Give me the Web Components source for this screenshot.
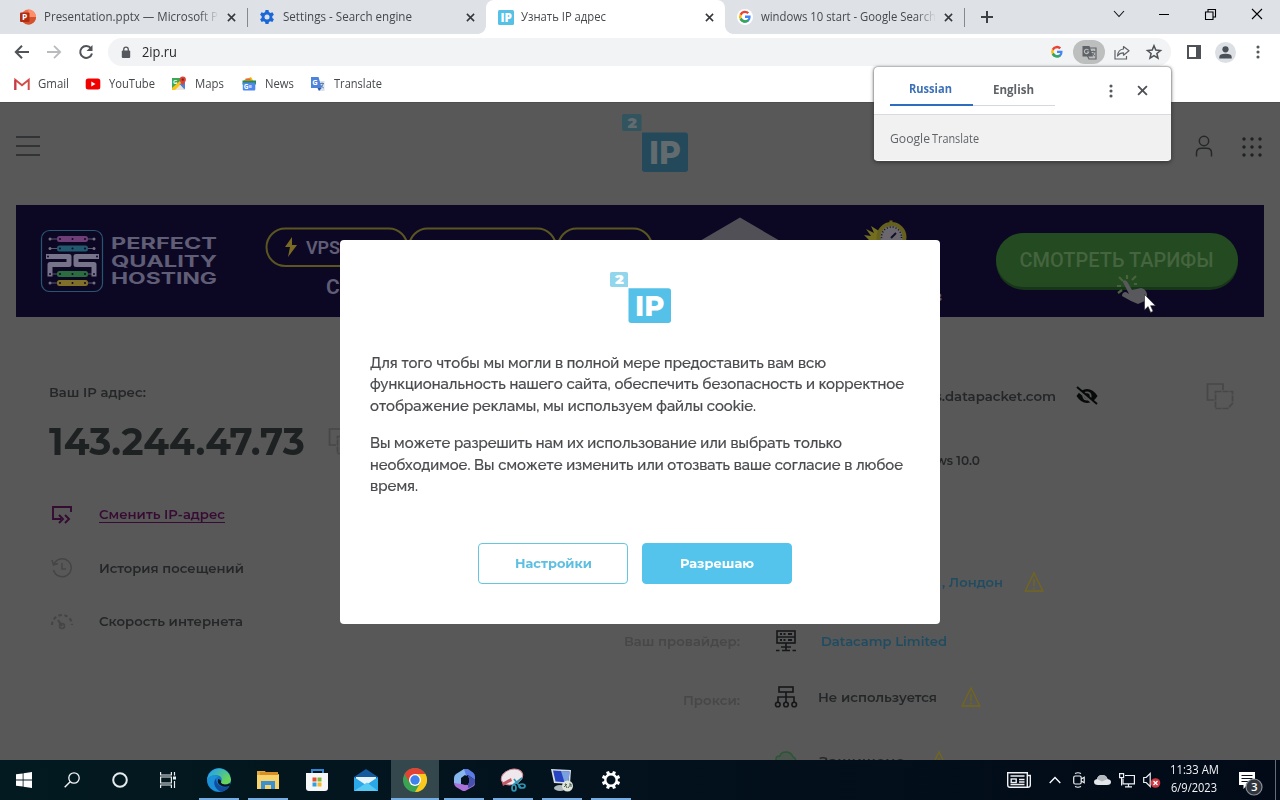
<!DOCTYPE html>
<html lang="ru">
<head>
<meta charset="utf-8">
<title>Узнать IP адрес</title>
<style>
    body {
        margin: 0;
        width: 1280px;
        height: 800px;
        overflow: hidden;
        font-family: "Open Sans", "Noto Sans", sans-serif;
        font-size: 12px;
        color: #45484c;
        display: flex;
        flex-direction: column;
        position: relative;
    }
</style>
</head>
<body>

<tab-strip>
    <browser-tab icon="ppt" text="Presentation.pptx — Microsoft P" w="174" fade line style="width:233px"></browser-tab>
    <browser-tab icon="gear" text="Settings - Search engine" w="129" style="width:233px"></browser-tab>
    <browser-tab icon="ip" text="Узнать IP адрес" w="85" active style="width:239px"></browser-tab>
    <browser-tab icon="google" text="windows 10 start - Google Search" w="175" fade line style="width:233px;margin-left:-6px"></browser-tab>
</tab-strip>
<browser-toolbar url="2ip.ru"></browser-toolbar>
<bookmarks-bar>
    <book-mark icon="gmail" w="31" style="margin-right:16px">Gmail</book-mark>
    <book-mark icon="youtube" w="46" style="margin-right:16px">YouTube</book-mark>
    <book-mark icon="maps" w="29" style="margin-right:17px">Maps</book-mark>
    <book-mark icon="news" w="29" style="margin-right:16px">News</book-mark>
    <book-mark icon="translate" w="48">Translate</book-mark>
</bookmarks-bar>

<ip-page></ip-page>
<task-bar></task-bar>

<translate-popup></translate-popup>
<cookie-modal>
    <p>
        <fit-text w="456">Для того чтобы мы могли в полной мере предоставить вам всю</fit-text>
        <fit-text w="534">функциональность нашего сайта, обеспечить безопасность и корректное</fit-text>
        <fit-text w="386">отображение рекламы, мы используем файлы cookie.</fit-text>
    </p>
    <p>
        <fit-text w="472">Вы можете разрешить нам их использование или выбрать только</fit-text>
        <fit-text w="533">необходимое. Вы сможете изменить или отозвать ваше согласие в любое</fit-text>
        <fit-text w="48">время.</fit-text>
    </p>
    <modal-button slot="actions" w="77">Настройки</modal-button>
    <modal-button slot="actions" w="74" primary>Разрешаю</modal-button>
</cookie-modal>
<mouse-pointer></mouse-pointer>

<script>
// name: [width, height, svg content]
const googleG = `
    <path d="M8 6.6v3h4.2c-.3 1.5-1.800 2.800-4.200 2.800A4.500 4.500 0 0 1 3.800 9.400L1.300 11.300A7.500 7.500 0 0 0 8 15.500c4 0 7-2.800 7-7.400 0-.500 0-1-.1-1.500z" fill="#4285f4"/>
    <path d="M1.300 11.300A7.500 7.500 0 0 0 8 15.500c2 0 3.600-.600 4.800-1.700l-2.400-1.900a4.500 4.500 0 0 1-6.600-2.500z" fill="#34a853"/>
    <path d="M3.800 9.400a4.500 4.500 0 0 1 0-2.900L1.300 4.600a7.500 7.500 0 0 0 0 6.700z" fill="#fbbc05"/>
    <path d="M8 3.500c1.200 0 2.200.4 3 1.200l2.200-2.200A7.500 7.500 0 0 0 1.300 4.600l2.500 1.900A4.500 4.500 0 0 1 8 3.500z" fill="#ea4335"/>`

const cross = `<path d="M1 1l8 8M9 1L1 9" stroke="currentColor" stroke-width="1.7" fill="none"/>`
const warn = `<path d="M10 2L18.800 20H1.200z" fill="none" stroke="#71651f" stroke-width="1.500"/><path d="M10 8v7M10 16.500v2" stroke="#71651f" stroke-width="1.400"/>`
const copyIcon = `<g fill="none" stroke="currentColor" stroke-width="1.700"><path d="M8 18H1.500V2H17v6"/><path d="M9.500 9.500h17v12l-5 5h-12z" stroke-dasharray="6 1"/></g>`

const icons = {
    ppt: [16, 16, `<circle cx="8.500" cy="8" r="7.500" fill="#ed6c47"/><path d="M8.500.5A7.500 7.500 0 0 1 16 8H8.500z" fill="#ff8f6b"/><path d="M1 8h15a7.500 7.500 0 0 1-13 5z" fill="#d35230"/><rect y="3.500" width="9.500" height="9.500" rx="1" fill="#b02d14"/><text x="2" y="11.400" font-family="Open Sans" font-weight="700" font-size="8.500" fill="#fff">P</text>`],
    gear: [16, 16, `<path d="M6.500 1h3l.4 2 1.500.9 2-.7 1.500 2.600-1.600 1.400v1.700l1.600 1.400-1.500 2.600-2-.700-1.500.9-.4 2h-3l-.4-2-1.500-.9-2 .7-1.500-2.600 1.600-1.400V7.200L1.100 5.800l1.500-2.600 2 .7 1.500-.9z" fill="#1a67d8"/><circle cx="8" cy="8" r="2.500" fill="#dee1e6"/>`],
    ip: [16, 15, `<rect width="16" height="15" rx="1.500" fill="#55c1e6"/><text x="2.500" y="12" font-family="Open Sans" font-weight="800" font-size="12" textLength="11.500" lengthAdjust="spacingAndGlyphs" fill="#fff">IP</text>`],
    google: [16, 16, `<circle cx="8" cy="8" r="8" fill="#fff"/><g transform="translate(1.600 1.300) scale(.8)">${googleG}</g>`],
    g: [16, 16, `<g transform="translate(1.800 1.500) scale(.78)">${googleG}</g>`],
    cross: [10, 10, cross],
    plus: [12, 12, `<path d="M6 0v12M0 6h12" stroke="#3c4043" stroke-width="2"/>`],
    chev: [12, 8, `<path d="M1 1l5 5.500L11 1" fill="none" stroke="#111" stroke-width="1.100"/>`],
    min: [10, 10, `<path d="M0 5.500h10" stroke="#000"/>`],
    restore: [11, 11, `<path d="M.5 3h7.500v7.500H.5zM3 3V.5h7.500V8H8" fill="none" stroke="#000" stroke-width="1.100"/>`],
    close: [12, 12, `<path d="M1 1l10 10M11 1L1 11" stroke="#000" stroke-width="1.100"/>`],
    back: [16, 14, `<path d="M15 7H2M8 .8L1.800 7 8 13.200" fill="none" stroke="#505357" stroke-width="2"/>`],
    forward: [16, 14, `<path d="M1 7h13M8 .8L14.200 7 8 13.200" fill="none" stroke="#b9bbbe" stroke-width="1.800"/>`],
    reload: [16, 16, `<path d="M13 4.300A6 6 0 1 0 14 9.500" fill="none" stroke="#505357" stroke-width="2"/><path d="M14.500 1v6h-6z" fill="#505357"/>`],
    lock: [10, 13, `<rect x=".8" y="4.500" width="8.400" height="7.500" rx="1" fill="#55585c"/><path d="M2.700 5V3.500a2.300 2.300 0 0 1 4.600 0V5" fill="none" stroke="#55585c" stroke-width="1.300"/>`],
    trans: [15, 15, `<path d="M5 3h9v11H7l-2-4" fill="none" stroke="#5f6368" stroke-width="1.200"/><path d="M.5 1h7l3.500 10.500H.5z" fill="#5f6368"/><path d="M6.500 5.300A2.200 2.200 0 1 0 6.700 7H4.800" fill="none" stroke="#bbb" stroke-width="1.100"/><path d="M9 6.500h4.500M11.200 5.500v1M12.500 6.500q-.5 2.500-3 4.500M10 8q1 2 3 3" fill="none" stroke="#5f6368" stroke-width=".9"/>`],
    share: [16, 15, `<path d="M1 5v9h11.500v-3" fill="none" stroke="#5f6368" stroke-width="1.200"/><path d="M9.500 1.500l5.500 4.300-5.500 4.400V7.800Q5.500 7.800 3.500 11 4 4.500 9.500 4z" fill="none" stroke="#5f6368" stroke-width="1.200" stroke-linejoin="round"/>`],
    star: [16, 16, `<path d="M8 1.800l1.800 4.300 4.700.4-3.600 3 1.100 4.600L8 11.700l-4 2.400 1.100-4.600-3.600-3 4.700-.4z" fill="none" stroke="#4e5155" stroke-width="1.500"/>`],
    panel: [14, 14, `<rect x="1" y="1" width="12" height="12" fill="none" stroke="#4e5155" stroke-width="2"/><path d="M9 0h5v14H9z" fill="#4e5155"/>`],
    avatar: [21, 21, `<circle cx="10.500" cy="10.500" r="10.500" fill="#dcdfe4"/><circle cx="10.500" cy="7.300" r="3.100" fill="#4a5058"/><path d="M4.300 16.500V15q0-3.300 6.200-3.300t6.200 3.300v1.500z" fill="#4a5058"/>`],
    dots: [4, 14, `<g fill="#55585c"><circle cx="2" cy="2" r="1.550"/><circle cx="2" cy="7" r="1.550"/><circle cx="2" cy="12" r="1.550"/></g>`],
    gmail: [16, 12, `<path d="M1.300 12V1.800L8 7.300l6.700-5.500V12" fill="none" stroke="#d44a44" stroke-width="2"/><path d="M1.300 12V2" stroke="#c33c4e" stroke-width="2"/>`],
    youtube: [16, 12, `<rect x=".7" y=".5" width="14.600" height="11" rx="2.500" fill="#f20000"/><path d="M6.300 3.600L10.500 6l-4.200 2.400z" fill="#fff"/>`],
    maps: [16, 16, `<path d="M1 2h12v12H1z" fill="#3ba757"/><path d="M1 14l7-7 6 7z" fill="#e9e5dc"/><path d="M1 12V14h3l8-8-2-2z" fill="#fbc116"/><path d="M8.500 8l5.500 5.500V6z" fill="#4a80e8"/><text x="2" y="7.500" font-family="Open Sans" font-weight="700" font-size="6" fill="#fff">G</text><path d="M11.700 9.500C10 6.500 8.700 5.800 8.700 3.700a3 3 0 0 1 6.200 0c0 2.100-1.600 2.800-3.200 5.800z" fill="#db4437"/><circle cx="11.800" cy="3.700" r="1.100" fill="#7b1f1a"/>`],
    news: [16, 16, `<path d="M3 4l7-3 3 5H3z" fill="#fbbc04"/><path d="M1.500 4.500h13.500v4h-13.500z" fill="#228b51"/><path d="M4.500 2.500h5v2h-5z" fill="#e0664b"/><rect x="1.800" y="6.500" width="12.500" height="8" rx="1" fill="#4d88ee"/><text x="2.800" y="13" font-family="Open Sans" font-weight="700" font-size="6.500" fill="#fff">G≡</text>`],
    translate: [16, 16, `<path d="M6 5h8.500v10H9z" fill="#dbe1ec"/><path d="M1 1h7.500l3.200 11H1z" fill="#4c83dc"/><path d="M7.500 12h4.200L9 15z" fill="#2e58b0"/><text x="2.300" y="9" font-family="Open Sans" font-weight="700" font-size="7.500" fill="#fff">G</text><path d="M9.500 7.500H14M12 6.500v1M13.300 7.500q-.5 2.500-2.700 4M10.800 9q1 2 3 3" fill="none" stroke="#5c7fb5" stroke-width="1"/>`],

    logo: [66, 58, `<path d="M2 0h15.500a2 2 0 0 1 2 2v15H2a2 2 0 0 1-2-2V2a2 2 0 0 1 2-2z" fill="var(--logo-small)"/><path d="M20 18.500h43a3 3 0 0 1 3 3V55a3 3 0 0 1-3 3H23a3 3 0 0 1-3-3z" fill="var(--logo-big)"/><text x="5.500" y="13.500" font-family="Montserrat, Inter" font-weight="900" font-size="14" textLength="9.500" lengthAdjust="spacingAndGlyphs" fill="var(--logo-text)">2</text><text x="27" y="49.500" font-family="Montserrat, Inter" font-weight="800" font-size="33" textLength="32" lengthAdjust="spacingAndGlyphs" fill="var(--logo-text)">IP</text>`],
    burger: [24, 20, `<path d="M0 1h24M0 10h24M0 19h24" stroke="#252728" stroke-width="1.700"/>`],
    person: [18, 22, `<g fill="none" stroke="#252728" stroke-width="1.500"><circle cx="9" cy="6" r="4.700"/><path d="M1.500 21.500V18q0-4.800 4.800-4.800h5.400q4.800 0 4.800 4.800v3.500"/></g>`],
    apps: [20, 20, `<g fill="#1f2122"><circle cx="2" cy="2" r="1.700"/><circle cx="10" cy="2" r="1.700"/><circle cx="18" cy="2" r="1.700"/><circle cx="2" cy="10" r="1.700"/><circle cx="10" cy="10" r="1.700"/><circle cx="18" cy="10" r="1.700"/><circle cx="2" cy="18" r="1.700"/><circle cx="10" cy="18" r="1.700"/><circle cx="18" cy="18" r="1.700"/></g>`],
    change: [22, 20, `<g fill="none" stroke="#350c31" stroke-width="1.900"><path d="M20 7V2H2v12h8"/><path d="M8 10l4 4-4 4M14 10l4 4-4 4"/></g>`],
    history: [22, 22, `<g fill="none" stroke="#454545" stroke-width="1.500"><path d="M3 7a9 9 0 1 1-.5 6M1 3l1.500 5 4.500-1.500M11 6v6h4"/></g>`],
    speed: [24, 18, `<g fill="none" stroke="#454545" stroke-width="2.200"><path d="M2 13A10 10 0 0 1 22 13" stroke-dasharray="3.500 2.500"/><path d="M8 8l4 6"/><circle cx="12" cy="14" r="2.500" stroke-width="1.500"/></g>`],
    copy: [28, 28, copyIcon],
    eye: [24, 20, `<path d="M1.500 10Q6 3 12 3t10.500 7Q18 17 12 17T1.500 10z" fill="#080909"/><circle cx="12" cy="10" r="4.600" fill="#585858"/><circle cx="12" cy="10" r="2.700" fill="#080909"/><path d="M2 3l19 16" stroke="#585858" stroke-width="3.500"/><path d="M2 1l20 17" stroke="#080909" stroke-width="2"/>`],
    warn: [20, 22, warn],
    server: [20, 22, `<g fill="none" stroke="#161718" stroke-width="1.600"><rect x="1" y="1" width="18" height="12"/><path d="M1 7h18M10 13v7M0 20.500h3.500M6 20.500h8M16.500 20.500H20M5 17h10"/><path d="M4 4h2M7.500 4h2M12 4h4M4 10h2M7.500 10h2M12 10h4" stroke-width="1.800"/></g>`],
    network: [24, 22, `<g fill="none" stroke="#161718" stroke-width="1.600"><rect x="5" y="1" width="14" height="5"/><path d="M12 6v10M4 16v-5h16v5"/><circle cx="3.800" cy="18.500" r="2.300"/><circle cx="12" cy="18.500" r="2.300"/><circle cx="20.200" cy="18.500" r="2.300"/></g>`],
    shield: [24, 22, `<path d="M2 20V9q0-3 4-3 1-4 6-4t7 5q3 1 3 5v10" fill="#35563b" fill-opacity=".35" stroke="#2c5535" stroke-width="1.500"/>`],

    win: [16, 16, `<path d="M0 2.300l6.700-.9v6.200H0zM7.500 1.300L16 0v7.600H7.500zM0 8.400h6.700v6.200L0 13.700zM7.500 8.400H16V16l-8.500-1.300z" fill="#fff"/>`],
    search: [16, 16, `<circle cx="10" cy="6" r="5.200" fill="none" stroke="#f2f5f6" stroke-width="1.300"/><path d="M6.200 9.800L.7 15.300" stroke="#f2f5f6" stroke-width="1.400"/>`],
    cortana: [16, 16, `<circle cx="8" cy="8" r="6.800" fill="none" stroke="#e4ecec" stroke-width="2"/>`],
    taskview: [16, 16, `<g fill="none" stroke="#e8eded" stroke-width="1.200"><path d="M.6 0v3h10.800V0M.6 16v-3h10.800v3"/><path d="M.6 5h10.800v6H.6zM14.500 0v3.500M14.500 9v7"/></g><rect x="13" y="4.500" width="3" height="3" fill="#e8eded"/>`],
    edge: [24, 24, `<defs><linearGradient id="e" x1="0" y1="0" x2="1" y2=".7"><stop offset=".2" stop-color="#2ba7df"/><stop offset=".9" stop-color="#67d65a"/></linearGradient></defs><circle cx="12" cy="12" r="12" fill="#1878c9"/><path d="M.3 10A12 12 0 0 1 24 11.500c0 3.500-3 5.500-6.500 5-3.300-.300-4-1.600-3.300-3C16 10 13.300 7.300 9 7.300 5 7.300 1.500 9 .3 12z" fill="url(#e)"/><path d="M9 10.500c-3.500 3-2 10.500 4.500 13A12 12 0 0 1 .2 12C1 8 7 6 11.500 8 10.500 8.500 9.700 9.500 9 10.500z" fill="#1b91d8"/><path d="M9 10.500C5 15 9 22 14 23.600c3.500-.300 6.700-2.400 8.500-5.300C16 21 9 17.500 9 10.500z" fill="#124c9c"/><path d="M14.200 13.500q-1.200 2 3.300 3 3 .4 5-1.500l.7 2.500q-5 2.500-9.500 0-4-2.500-2.500-6.500 2.700 0 3 2.500z" fill="#04161f"/>`],
    folder: [22, 20, `<path d="M0 1h8l2 3h12v15H0z" fill="#e6a93e"/><path d="M3 2h18v4H3z" fill="#d98f26"/><path d="M0 5h22v14H0z" fill="#f8d26b"/><path d="M4 19v-8h14v8h-4v-4H8v4z" fill="#3c90cf"/>`],
    store: [24, 24, `<path d="M7 6V2h11v4" fill="none" stroke="#3288d2" stroke-width="2"/><path d="M1 5h22v15a3 3 0 0 1-3 3H4a3 3 0 0 1-3-3z" fill="#f6f7f8"/><path d="M7.500 9.500h4v4h-4z" fill="#e5512e"/><path d="M12.500 9.500h4v4h-4z" fill="#7eb837"/><path d="M7.500 14.500h4v4h-4z" fill="#32a0df"/><path d="M12.500 14.500h4v4h-4z" fill="#f4b72d"/>`],
    mail: [24, 22, `<path d="M0 8l12-8 12 8v5H0z" fill="#135a9f"/><path d="M2 8h20v8H2z" fill="#e9f3fb"/><path d="M0 8l12 8 12-8v14H0z" fill="#2ba8e8"/><path d="M0 22l13-8.500L24 22z" fill="#56c9f5"/>`],
    chrome: [24, 24, `<circle cx="12" cy="12" r="12" fill="#3ba452"/><path d="M1.600 6A12 12 0 0 1 22.400 6H12L6.800 15z" fill="#e34133"/><path d="M22.400 6A12 12 0 0 1 12 24l5.200-9L12 6z" fill="#fbc91c"/><circle cx="12" cy="12" r="6" fill="#fff"/><circle cx="12" cy="12" r="4.700" fill="#3f82ee"/>`],
    m365: [22, 24, `<path d="M11 1h4l5 3.500q2 1.500 2 4V12l-7-5-7 4V4z" fill="#5b7ce4"/><path d="M11 1L3 6Q1 7.500 1 10v5l7 4v-8l5-4z" fill="#88b6ee"/><path d="M1 15q0 2.500 2 4l6 3.500q2 1 4 0l8-4.500q1-1 1-3v-3l-7 5-7-1z" fill="#aa72d8"/><path d="M15 7l7 5v3q-1 3-7 5z" fill="#4850ad"/><path d="M8 10l4-3 4 3v5l-4 2-4-2z" fill="#06131e"/>`],
    snip: [24, 24, `<ellipse cx="11" cy="9" rx="11" ry="7.500" fill="#eee8ec" stroke="#d58a98" stroke-width="1" transform="rotate(-18 11 9)"/><path d="M1 15l9-5 1 3-9 5z" fill="#c45965"/><g fill="none" stroke="#2e95b3" stroke-width="1.700"><path d="M12 17l9-7M20 20l-7-9"/><ellipse cx="13" cy="20" rx="2" ry="3"/><ellipse cx="21" cy="18" rx="3" ry="2"/></g>`],
    remote: [24, 24, `<path d="M1 1l20 1-1 14-16-1z" fill="#d7dee2"/><path d="M3 2.500l16.500 1-1 11-13-1z" fill="#2743c2"/><path d="M11 3l8.500.500-1 11-4-.3z" fill="#7ba0e0"/><ellipse cx="10" cy="20" rx="6" ry="3" fill="#aebabb"/><circle cx="17.500" cy="18" r="5.500" fill="#dfe5d9"/><path d="M14 19l3-3M16 16h-1l2 4M18 20l3-4M19 16h2v3" stroke="#4e6659" stroke-width="1" fill="none"/>`],
    settings: [20, 20, `<circle cx="10" cy="10" r="5.700" fill="none" stroke="#fff" stroke-width="2.400"/><g stroke="#fff" stroke-width="3.200"><path d="M6.500 1.500l1.200 3M13.500 1.500l-1.200 3M6.500 18.500l1.200-3M13.500 18.500l-1.200-3M1.500 6.500l3 1.200M1.500 13.500l3-1.200M18.500 6.500l-3 1.200M18.500 13.500l-3-1.200"/></g>`],
    paper: [24, 16, `<g fill="none" stroke="#eef0f2" stroke-width="1.400"><path d="M.7.7h19.600v14.600H3q-2.300 0-2.300-2.300zM20.300 3.500h3v9.500q0 2.300-2.500 2.300H18"/><path d="M3.500 4h14M12 7.500h5.500M12 10h5.500M3.500 12.500h14"/><rect x="4.200" y="7" width="5" height="3.500"/></g>`],
    up: [12, 8, `<path d="M.7 7L6 1.500 11.300 7" fill="none" stroke="#fff" stroke-width="1.300"/>`],
    meet: [12, 16, `<g fill="none" stroke="#eef0f2" stroke-width="1.200"><rect x=".7" y="4" width="7.500" height="8" rx="1.500"/><path d="M8.200 7l3-1.800v5.600l-3-1.800M2 1.500q3-1.500 6 0M2 14.500q3 1.500 6 0"/></g>`],
    cloud: [17, 12, `<path d="M4 11q-4 0-4-3 0-2.500 3-3Q4 1 8 1q4.500 0 5.500 4 3.500.5 3.500 3 0 3-4 3z" fill="#e4e7e9"/><path d="M3 5Q4 1 8 1q4.500 0 5.500 4L8 7.500z" fill="#b4b9bd"/>`],
    net: [16, 15, `<g fill="none" stroke="#eef0f2" stroke-width="1.200"><path d="M6 2.500h9.400v8.300H4V6M9.500 11v2.500M6 13.900h7"/><path d="M.6.6h4v4h-4zM2.600 4.600v8"/></g>`],
    vol: [18, 16, `<path d="M.7 5.500h2.500l4-4v13l-4-4H.7z" fill="none" stroke="#eef0f2" stroke-width="1.200"/><circle cx="12.500" cy="11" r="4.800" fill="#d03941"/><path d="M10.500 9l4 4M14.500 9l-4 4" stroke="#fff" stroke-width="1.300"/>`],
    note: [26, 25, `<path d="M1 1h16v13H9l-3.500 4v-4H1z" fill="#fff"/><path d="M3.500 4.500h11M3.500 7.500h11M3.500 10.500h7" stroke="#07111f" stroke-width="1.200"/><circle cx="16" cy="16" r="8" fill="#30353e" stroke="#8a8f97" stroke-width="1.200"/><text x="13" y="20.300" font-family="Open Sans" font-weight="600" font-size="11.500" fill="#fff">3</text>`]
}

const define = (name, html, setup) => {
    customElements.define(name, class extends HTMLElement {
        constructor() {
            super()
            this.attachShadow({ mode: 'open' })
        }

        connectedCallback() {
            const template = document.createElement('template')
            template.innerHTML = typeof html === 'function' ? html(this) : html
            this.shadowRoot.replaceChildren(template.content.cloneNode(true))
            if (setup) setup(this)
        }
    })
}

define('svg-icon', el => {
    const [w, h, body] = icons[el.getAttribute('name')]
    const width = el.getAttribute('w') || w
    const height = el.getAttribute('h') || h
    return `
        <style>
        :host { display: block; flex: none; width: ${width}px; height: ${height}px; }
        svg { display: block; overflow: visible; }
        </style>
        <svg width="${width}" height="${height}" viewBox="0 0 ${w} ${h}" preserveAspectRatio="none">${body}</svg>
    `
})

/* ---------- browser ---------- */

define('tab-strip', `
    <style>
    :host { display: flex; height: 34px; flex: none; background: #dee1e6; }
    .tabs { display: flex; padding-left: 8px; gap: 6px; }
    .plus { margin: 11px 0 0 23px; }
    .window { display: flex; align-items: center; margin-left: auto; height: 28px; padding-right: 17px; }
    </style>
    <div class="tabs"><slot></slot></div>
    <svg-icon class="plus" name="plus"></svg-icon>
    <div class="window">
        <svg-icon name="chev" style="margin-right:34px"></svg-icon>
        <svg-icon name="min" style="margin-right:36px"></svg-icon>
        <svg-icon name="restore" style="margin-right:35px"></svg-icon>
        <svg-icon name="close"></svg-icon>
    </div>
`)

define('browser-tab', el => `
    <style>
    :host { display: flex; align-items: center; box-sizing: border-box; padding: 0 5px 0 12px; height: 34px; position: relative; }
    :host([active]) { background: #fff; border-radius: 8px 8px 0 0; padding-right: 11px; }
    :host([active])::before, :host([active])::after {
        content: ""; position: absolute; bottom: 0; width: 8px; height: 8px;
    }
    :host([active])::before { left: -8px; background: radial-gradient(circle at 0 0, transparent 7.5px, #fff 8px); }
    :host([active])::after { right: -8px; background: radial-gradient(circle at 100% 0, transparent 7.5px, #fff 8px); }
    .title { margin: -2px 0 0 8px; overflow: hidden; max-width: 175px; }
    :host([active]) .title { margin-left: 7px; }
    :host([fade]) .title { -webkit-mask: linear-gradient(90deg, #000 155px, transparent 175px); }
    svg-icon.x { margin-left: auto; color: #34373b; }
    :host([line])::after { content: ""; position: absolute; right: -7px; top: 8px; width: 1px; height: 19px; background: #85898e; }
    </style>
    <svg-icon name="${el.getAttribute('icon')}"></svg-icon>
    <div class="title"><fit-text w="${el.getAttribute('w')}">${el.getAttribute('text')}</fit-text></div>
    <svg-icon class="x" name="cross" w="9" h="9"></svg-icon>
`)

define('browser-toolbar', el => `
    <style>
    :host { display: flex; align-items: center; height: 36px; flex: none; background: #fff; padding: 0 20px 0 14px; }
    .omnibox { display: flex; align-items: center; box-sizing: border-box; width: 1063px; height: 28px; margin-left: 14px; padding: 0 9px 0 13px; border-radius: 14px; background: #f1f3f4; }
    .url { margin: -2px 0 0 11px; font-size: 14px; color: #27292c; }
    .right { display: flex; align-items: center; margin-left: auto; }
    .chip { display: grid; place-items: center; width: 32px; height: 24px; margin: 0 9px 0 8px; border-radius: 12px; background: #bdbebe; }
    </style>
    <svg-icon name="back"></svg-icon>
    <svg-icon name="forward" style="margin-left:16px"></svg-icon>
    <svg-icon name="reload" style="margin-left:16px"></svg-icon>
    <div class="omnibox">
        <svg-icon name="lock"></svg-icon>
        <fit-text class="url" w="35">${el.getAttribute('url')}</fit-text>
        <div class="right">
            <svg-icon name="g"></svg-icon>
            <div class="chip"><svg-icon name="trans"></svg-icon></div>
            <svg-icon name="share" style="margin-right:16px"></svg-icon>
            <svg-icon name="star"></svg-icon>
        </div>
    </div>
    <svg-icon name="panel" style="margin-left:16px"></svg-icon>
    <svg-icon name="avatar" style="margin-left:14px"></svg-icon>
    <svg-icon name="dots" style="margin-left:20px"></svg-icon>
`)

define('bookmarks-bar', `
    <style>
    :host { display: flex; align-items: center; height: 32px; flex: none; background: #fff; padding: 0 0 5px 14px; box-sizing: border-box; }
    </style>
    <slot></slot>
`)

define('book-mark', el => `
    <style>
    :host { display: flex; align-items: center; gap: 8px; }
    fit-text { margin-top: -1px; }
    </style>
    <svg-icon name="${el.getAttribute('icon')}"></svg-icon>
    <fit-text w="${el.getAttribute('w')}">${el.textContent}</fit-text>
`)

define('translate-popup', `
    <style>
    :host { position: absolute; left: 874px; top: 67px; width: 297px; height: 94px; background: #fff; border-radius: 4px; box-shadow: 0 0 2px #555, 0 1px 4px rgba(0,0,0,.5); overflow: hidden; }
    .head { display: flex; height: 48px; box-sizing: border-box; padding-left: 16px; border-bottom: 1px solid #d8dadd; }
    .tab { display: flex; justify-content: center; align-items: center; box-sizing: border-box; width: 82px; height: 39px; padding-top: 7px; font-weight: 700; color: #5f6368; border-bottom: 1px solid #d5d8dc; }
    .tab.on { width: 83px; color: #3b70b8; border-bottom: 2px solid #2d6cc0; }
    .tab fit-text { margin: -1px 2px 0 0; }
    .acts { display: flex; align-items: center; gap: 24px; margin-left: 54px; color: #4f5256; }
    .foot { display: flex; align-items: center; height: 45px; padding-left: 16px; background: #f1f1f1; color: #5f6368; font-size: 13px; }
    </style>
    <div class="head">
        <div class="tab on"><fit-text w="43">Russian</fit-text></div>
        <div class="tab"><fit-text w="41">English</fit-text></div>
        <div class="acts"><svg-icon name="dots"></svg-icon><svg-icon name="cross" w="11" h="11"></svg-icon></div>
    </div>
    <div class="foot"><fit-text w="40" style="font-size:13.500px;font-weight:500">Google</fit-text><fit-text w="47" style="margin-left:2px">Translate</fit-text></div>
`)

/* ---------- page ---------- */

define('ip-page', `
    <style>
    :host { display: block; height: 657px; flex: none; margin-top: 1px; overflow: hidden; background: #585858; color: #242627; font: 600 13px Montserrat, Inter, "Open Sans", sans-serif; }
    :host { --logo-small: #31545f; --logo-big: #24495b; --logo-text: #626b6e; box-shadow: 0 -1px #4d4d4d; }
    header { display: grid; grid-template-columns: 1fr 66px 1fr; height: 102px; box-sizing: border-box; padding: 11px 18px 0 16px; }
    header .burger { padding-top: 22px; }
    header .tools { display: flex; justify-content: flex-end; gap: 29px; padding-top: 21px; }
    main { display: grid; grid-template-columns: 520px 1fr; }
    .own { padding: 65px 0 0 49px; }
    .address { display: flex; align-items: center; gap: 23px; height: 50px; margin-top: 14px; font-size: 38px; font-weight: 700; color: #1d2122; }
    .copy { color: #474747; }
    .links { margin-top: 22px; }
    </style>
    <header>
        <div class="burger"><svg-icon name="burger"></svg-icon></div>
        <svg-icon name="logo" style="margin-left:16px"></svg-icon>
        <div class="tools"><svg-icon name="person"></svg-icon><svg-icon name="apps" style="margin-top:2px"></svg-icon></div>
    </header>
    <hosting-banner></hosting-banner>
    <main>
        <section class="own">
            <fit-text w="97" style="line-height:20px">Ваш IP адрес:</fit-text>
            <div class="address"><fit-text w="256">143.244.47.73</fit-text><svg-icon class="copy" name="copy"></svg-icon></div>
            <div class="links">
                <side-link icon="change" w="126" marked>Сменить IP-адрес</side-link>
                <side-link icon="history" w="145">История посещений</side-link>
                <side-link icon="speed" w="144">Скорость интернета</side-link>
            </div>
        </section>
        <section class="facts">
            <fact-row style="height:64px;margin-top:47px" text="s.datapacket.com" w="121" gap="114" after="eye"></fact-row>
            <fact-row style="height:64px" text="Windows 10.0" w="86" gap="73"></fact-row>
            <fact-row style="height:58px;margin-top:61px" text=", Лондон" w="61" gap="121" space="21" link warn></fact-row>
            <fact-row style="height:58px;margin-top:1px" label="Ваш провайдер:" lw="116" icon="server" text="Datacamp Limited" w="126" link></fact-row>
            <fact-row style="height:57px;margin-top:-2px" label="Прокси:" lw="57" low="3" icon="network" text="Не используется" w="119" gap="-3" warn></fact-row>
            <fact-row style="height:58px;margin-top:7px" icon="shield" text="Защищено" w="86" gap="-2" warn></fact-row>
        </section>
    </main>
`)

define('side-link', el => `
    <style>
    :host { display: grid; grid-template-columns: 50px auto; align-items: center; justify-content: start; height: 53px; }
    .ico { width: 25px; display: flex; justify-content: center; }
    :host([marked]) .text { color: #370b33; border-bottom: 1px solid #370b33; }
    .text { line-height: 16px; }
    </style>
    <div class="ico"><svg-icon name="${el.getAttribute('icon')}"></svg-icon></div>
    <div class="text"><fit-text w="${el.getAttribute('w')}">${el.textContent}</fit-text></div>
`)

define('fact-row', el => {
    const get = name => el.getAttribute(name)
    return `
    <style>
    :host { display: grid; grid-template-columns: 220px 92px auto; align-items: center; }
    .label { display: flex; justify-content: flex-end; color: #474747; padding-top: ${get('low') || 0}px; margin-top: ${get('low') || 0}px; }
    .ico { display: flex; justify-content: center; padding-right: 1px; }
    .value { display: flex; align-items: center; gap: ${get('space') || 24}px; margin-left: ${Number(get('gap')) - 11}px; }
    :host([link]) .value { color: #204c62; }
    </style>
    <div class="label">${get('label') ? `<fit-text w="${get('lw')}">${get('label')}</fit-text>` : ''}</div>
    <div class="ico">${get('icon') ? `<svg-icon name="${get('icon')}"></svg-icon>` : ''}</div>
    <div class="value">
        <fit-text w="${get('w')}">${get('text')}</fit-text>
        ${el.hasAttribute('warn') ? '<svg-icon name="warn"></svg-icon>' : ''}
        ${get('after') ? `<svg-icon name="${get('after')}" style="margin-left:-5px"></svg-icon><svg-icon name="copy" style="margin-left:83px;color:#474747"></svg-icon>` : ''}
    </div>
`})

// banner artwork, drawn in its own 1248x112 space
const rail = (y, color) => `
    <path d="M34 ${y}h44" stroke="#5b5670" stroke-width="1"/>
    <circle cx="34" cy="${y}" r="1.500" fill="#736e86"/><circle cx="78" cy="${y}" r="1.500" fill="#736e86"/>
    <rect x="41" y="${y - 3}" width="31" height="6" rx="2.500" fill="${color}"/>
    <circle cx="44" cy="${y}" r="1" fill="#0c0824"/><circle cx="56.500" cy="${y}" r="1" fill="#0c0824"/><circle cx="69" cy="${y}" r="1" fill="#0c0824"/>`

const bolt = (x, y) => `<path transform="translate(${x} ${y})" d="M7 0L0 10h5L3 20 12 8H7z" fill="#7a6b22"/>`

define('hosting-banner', `
    <style>
    :host { display: block; width: 1248px; height: 112px; margin: 0 16px; background: #0c0824; }
    svg { display: block; }
    </style>
    <svg width="1248" height="112" viewBox="0 0 1248 112">
        <rect x="25.500" y="25.500" width="61" height="61" rx="8" fill="none" stroke="#285672" stroke-width="1.200"/>
        ${rail(34, '#6e3f77')}${rail(43.500, '#23596f')}${rail(69, '#2c6d40')}${rail(78, '#80702a')}
        <g fill="none" stroke="#77738a" stroke-width="5" stroke-linejoin="round"><path d="M30 51.500h23v8H34v12"/><path d="M83 51.500H60v8h18v12"/></g>
        <g fill="#0c0824"><circle cx="32" cy="51.500" r="1"/><circle cx="81" cy="51.500" r="1"/><circle cx="34" cy="69" r="1"/><circle cx="78" cy="69" r="1"/></g>
        <g fill="#605d76" font-family="Inter" font-weight="700" font-size="15.500">
            <text x="95" y="44" textLength="106" lengthAdjust="spacingAndGlyphs">PERFECT</text>
            <text x="95" y="61.500" textLength="106" lengthAdjust="spacingAndGlyphs">QUALITY</text>
            <text x="95" y="79" textLength="106" lengthAdjust="spacingAndGlyphs">HOSTING</text>
        </g>
        <g fill="none" stroke="#5b5520" stroke-width="2">
            <rect x="250.500" y="23.500" width="141" height="37.500" rx="18.700"/>
            <rect x="393" y="23.500" width="147" height="37.500" rx="18.700"/>
            <rect x="542" y="23.500" width="94" height="37.500" rx="18.700"/>
        </g>
        ${bolt(269, 32)}
        <g fill="#605d76" font-family="Roboto, Inter" font-weight="600">
            <text x="290" y="48.500" font-size="18" textLength="34">VPS</text>
            <text x="310" y="89" font-size="21">C</text>
            <text x="917.500" y="95.500" font-size="15">в</text>
        </g>
        <path d="M683 36.500L724 12.500l41 24z" fill="#525057"/>
        <path d="M853 35l-5-5 7 1-5-7 8 4-3-7 8 5 1 9z" fill="#736d20"/>
        <circle cx="875.500" cy="32" r="13" fill="#aaa9a0" fill-opacity=".6" stroke="#66601f" stroke-width="4"/>
        <path d="M875 15.500v3" stroke="#66601f" stroke-width="3"/><circle cx="875.500" cy="32" r="10" fill="none" stroke="#111025" stroke-width="1.500" stroke-dasharray="1 2"/><path d="M875 33l5-5" stroke="#111025" stroke-width="2"/>
        <rect x="980" y="29" width="242" height="56" rx="28" fill="#173518"/>
        <rect x="980" y="28" width="242" height="54" rx="27" fill="#234a20"/>
        <text x="1003.500" y="62" font-family="Roboto, Inter" font-weight="500" font-size="20" textLength="194" lengthAdjust="spacingAndGlyphs" fill="#45643f">СМОТРЕТЬ ТАРИФЫ</text>
        <g stroke="#49633d" stroke-width="2.200"><path d="M1101 81h4M1103 72l4 4M1111 70v4M1120 71l-4 4M1121 79h-3M1102 88l4-3"/></g>
        <path d="M1107 76q3-2 5 2l4 7 9-2q5 1 6 6v6l-9 4-7-3-9-5q0-4 4-4l3 2-6-12z" fill="#59595d"/>
    </svg>
`)

/* ---------- cookie modal ---------- */

define('cookie-modal', `
    <style>
    :host { position: absolute; left: 340px; top: 240px; width: 600px; height: 384px; box-sizing: border-box; padding: 32px 30px 0; background: #fff; border-radius: 4px; color: #4a4b4e; font: 500 15px/21.300px Raleway, "Open Sans", sans-serif; }
    :host { --logo-small: #91d6ec; --logo-big: #55c1e8; --logo-text: #fff; }
    ::slotted(p) { margin: 0 0 16.500px; -webkit-text-stroke: .2px #4a4b4e; }
    .text { margin-top: 30px; height: 189.500px; }
    .actions { display: flex; justify-content: center; gap: 14px; padding-right: 10px; }
    </style>
    <svg-icon name="logo" w="61" h="51" style="margin-left:240px"></svg-icon>
    <div class="text"><slot></slot></div>
    <div class="actions"><slot name="actions"></slot></div>
`)

define('modal-button', el => `
    <style>
    :host { display: grid; place-items: center; box-sizing: border-box; width: 150px; height: 41px; padding-bottom: 1px; border: 1px solid #66c5df; border-radius: 4px; color: #5ebfe2; font: 700 13px Montserrat, Inter, sans-serif; }
    :host([primary]) { background: #54c4ed; border-color: #54c4ed; color: #fff; }
    </style>
    <fit-text w="${el.getAttribute('w')}">${el.textContent}</fit-text>
`)

define('mouse-pointer', `
    <style>
    :host { position: absolute; left: 1144px; top: 294px; }
    svg { display: block; }
    </style>
    <svg width="12" height="19" viewBox="0 0 12 19"><path d="M.5.5v15.500l3.600-3.400 2.500 5.800 2.500-1.100-2.500-5.600h4.900z" fill="#fff" stroke="#222" stroke-width=".6"/></svg>
`)

/* ---------- windows taskbar ---------- */

define('task-bar', `
    <style>
    :host { display: flex; height: 40px; flex: none; background: linear-gradient(90deg, #031a20, #03131d 40%, #020a18); color: #f4f5f6; }
    .sys { display: flex; width: 195px; }
    .sys > * { flex: none; width: 48px; display: grid; place-items: center; }
    .apps { display: flex; gap: 1px; }
    .tray { display: flex; align-items: center; margin-left: auto; }
    .clock { width: 60px; display: flex; flex-direction: column; align-items: center; line-height: 18px; margin: 0 0 0 3px; height: 38px; }
    .edge { width: 1px; height: 40px; background: #666c74; margin: 0 4px 0 11px; }
    </style>
    <div class="sys">
        <div><svg-icon name="win"></svg-icon></div>
        <div><svg-icon name="search"></svg-icon></div>
        <div><svg-icon name="cortana"></svg-icon></div>
        <div><svg-icon name="taskview"></svg-icon></div>
    </div>
    <div class="apps">
        <task-app icon="edge" open></task-app>
        <task-app icon="folder" open></task-app>
        <task-app icon="store"></task-app>
        <task-app icon="mail"></task-app>
        <task-app icon="chrome" open active></task-app>
        <task-app icon="m365" open></task-app>
        <task-app icon="snip" open></task-app>
        <task-app icon="remote" open></task-app>
        <task-app icon="settings" open></task-app>
    </div>
    <div class="tray">
        <svg-icon name="paper" style="margin-right:18px"></svg-icon>
        <svg-icon name="up" style="margin-right:12px"></svg-icon>
        <svg-icon name="meet" style="margin-right:9px"></svg-icon>
        <svg-icon name="cloud" style="margin-right:8px"></svg-icon>
        <svg-icon name="net" style="margin-right:8px"></svg-icon>
        <svg-icon name="vol"></svg-icon>
        <div class="clock"><fit-text w="49">11:33 AM</fit-text><fit-text w="46">6/9/2023</fit-text></div>
        <svg-icon name="note" style="margin:7px 0 0 14px"></svg-icon>
        <div class="edge"></div>
    </div>
`)

define('task-app', el => `
    <style>
    :host { display: grid; grid-template-rows: 40px; place-items: center; position: relative; width: 48px; height: 40px; }
    :host([active]) { background: #33474d; }
    :host([open])::after { content: ""; position: absolute; left: 4px; right: 4px; bottom: 0; height: 2px; background: #76aee4; }
    :host([active])::after { left: 0; right: 0; }
    </style>
    <svg-icon name="${el.getAttribute('icon')}"></svg-icon>
`)

// Stretches its text to an exact width. Registered last, so that fonts are already inherited.
define('fit-text', `
    <style>
    :host { display: block; white-space: nowrap; }
    span { display: inline-block; transform-origin: 0 50%; vertical-align: top; }
    </style>
    <span><slot></slot></span>
`, el => {
    const span = el.shadowRoot.querySelector('span')
    const width = Number(el.getAttribute('w'))
    const natural = span.getBoundingClientRect().width
    el.style.width = width + 'px'
    span.style.transform = `scaleX(${width / natural})`
})
</script>
</body>
</html>
